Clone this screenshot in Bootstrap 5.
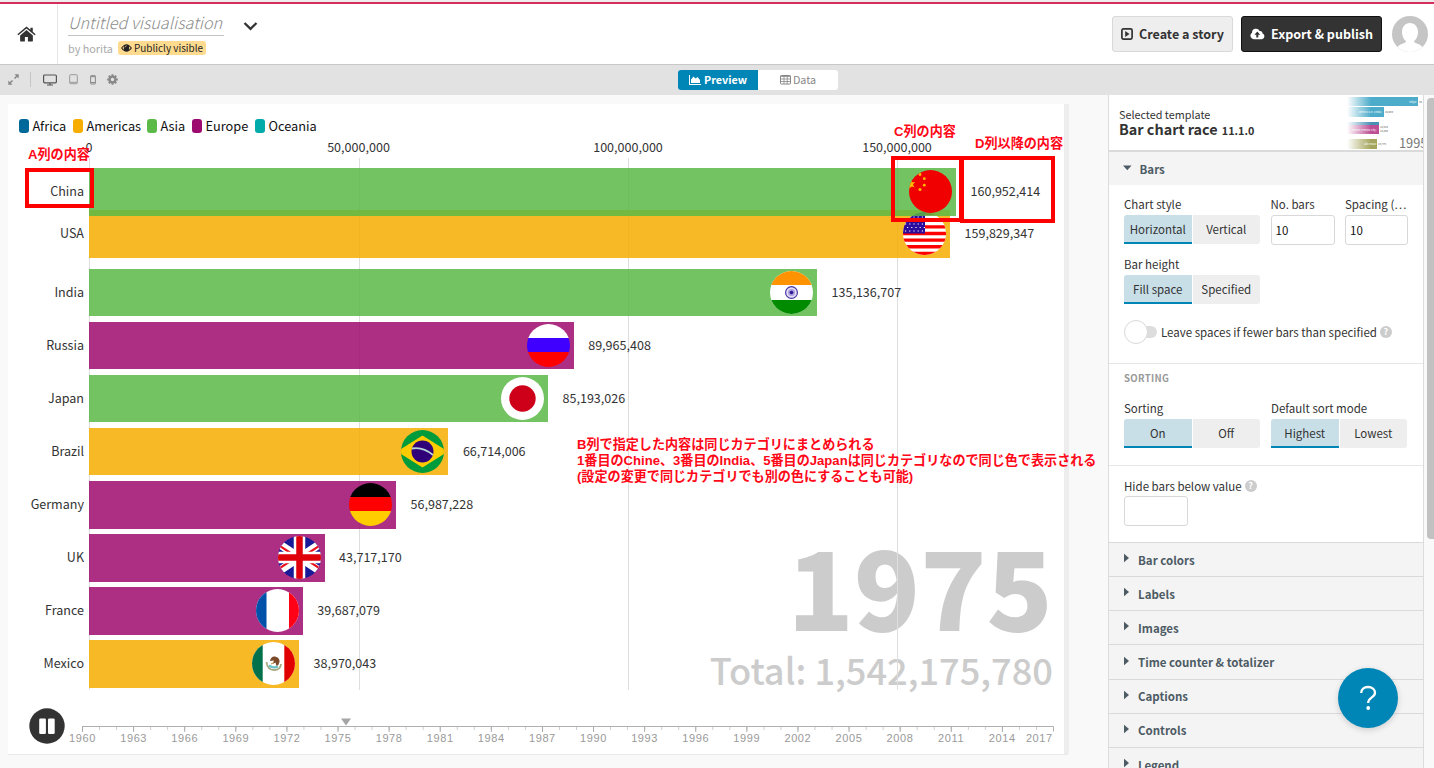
<!DOCTYPE html>
<html lang="en">
<head>
<meta charset="utf-8">
<meta name="viewport" content="width=device-width, initial-scale=1">
<title>Untitled visualisation</title>
<link rel="stylesheet" href="https://cdn.jsdelivr.net/npm/bootstrap@5.3.0/dist/css/bootstrap.min.css">
<style>
:root{--ink:#333;--line:#dcdcdc;--accent:#0086b6}
body{font-family:"Noto Sans CJK JP",sans-serif;font-size:12.55px;line-height:20px;color:var(--ink);background:#f9f9f9;height:768px;overflow:hidden}
svg{display:block;flex:none}
.topbar{height:65px;border-bottom:1px solid #c8c8c8;background:#fff;padding-top:4px;position:relative}
.topbar::before{content:"";position:absolute;left:0;right:0;top:0;height:4px;background:linear-gradient(#eee 0 2px,#d62e5c 2px 4px)}
.home{width:58px;border-right:1px solid #e6e6e6}
.vis-head{padding:7px 0 0 10px}
.vis-title{font-style:italic;font-weight:300;font-size:16.2px;line-height:22px;height:25px;width:156px;color:#8c8c8c;border-bottom:1px solid #c4c4c4;white-space:nowrap}
.byline{font-size:10.8px;color:#aaa;line-height:14px;margin-top:5px}
.visible-tag{background:#fedb8e;color:#222;border-radius:3px;height:14px;width:88px;padding-left:3px;white-space:nowrap;font-size:9.95px;line-height:12px}
.hbtn{height:36px;border-radius:3px;border:1px solid #d9d9d9;background:#eee;font-weight:700;font-size:12.55px;line-height:34px;padding:0;color:#333;white-space:nowrap}
.hbtn.dark{background:#333;border-color:#111;color:#fff}
.avatar{width:36px;height:36px;border-radius:50%;overflow:hidden}
.toolbar{height:30px;background:#e2e2e2;color:#888;padding:0 0 1px 8px}
.switcher{width:160px;height:20px;border-radius:3px;overflow:hidden;background:#fff;font-size:10.8px;line-height:19px;margin-left:560px}
.switcher>div{width:80px}
.switcher .on{background:var(--accent);color:#fff;font-weight:700}
.workspace{height:673px}
.stage{width:1061px;height:651px;margin:9px 0 0 8px;background:linear-gradient(90deg,#fff 1056px,#ededed 1056px);border-bottom:1px solid #e8e8e8;border-radius:0 0 3px 0;position:relative}
.legend-row{padding:12px 0 0 11px;color:#111;font-size:12.75px;height:32px;line-height:19px}
.swatch{width:10px;height:14px;border-radius:3px;margin-right:3.5px;flex:none}
.c-af{--c:#00699a}.c-am{--c:#f7ad00}.c-as{--c:#5bb947}.c-eu{--c:#9e0b6e}.c-oc{--c:#00aba9}
.swatch,.race-bar::before{background:var(--c)}
.plot{position:absolute;inset:0}
.tick-col{position:absolute;top:33px;width:100px;margin-left:-50px;text-align:center;line-height:20px}
.tick-col::after{content:"";position:absolute;left:50px;top:21px;width:1px;height:532px;background:#dedede}
.counter{position:absolute;right:16px;bottom:58px;text-align:right;color:#ccc;white-space:nowrap}
.counter .yr{font-size:109px;font-weight:900;line-height:104px;height:111px;margin-right:0}
.counter .tot{font-size:36.2px;line-height:53px;font-weight:500}
.race{position:relative;padding-top:32px}
.race-row{height:53.1px;position:relative}
.race-row.first{z-index:1}
.race-row.second{margin-top:-11px;height:58.5px}
.race-name{width:76px;margin-right:5px;text-align:right;line-height:45px}
.race-bar{height:47.6px;position:relative;padding:2px 4px 0 0}
.race-bar::before{content:"";position:absolute;inset:0;opacity:.85;border-radius:0}
.race-bar svg{position:relative;width:43px;height:43px;border-radius:50%}
.race-val{margin-left:14.5px;line-height:45px}
.timeline{position:absolute;left:21px;top:604px;width:1040px;height:44px}
.years{font-family:"Liberation Sans",sans-serif;font-size:11px;letter-spacing:.6px;color:#999;line-height:13px;margin-left:-25px;width:980px}
.years span{width:51.1px;text-align:center;flex:none}
.years .last{margin-left:-2px;text-align:right}
.note{position:absolute;color:#ff0818;font:700 13.1px/16px "Liberation Sans","Noto Sans CJK JP",sans-serif;white-space:nowrap}
.redbox{position:absolute;border:4px solid #f00;z-index:3}
.n-a{left:20px;top:43px}.n-c{left:886px;top:20px}.n-d{left:967px;top:32px}.n-b{left:569px;top:333px}
.b-a{left:17px;top:64px;width:69px;height:40px}.b-c{left:883px;top:52px;width:72px;height:66px}.b-d{left:952px;top:52px;width:95px;height:67px}
.side{width:316px;margin-left:39px;background:#fff;border:1px solid #dcdcdc;border-width:0 1px;overflow:hidden;font-size:11.5px}
.side-head{height:57px;border-bottom:2px solid #dadada;padding-left:10px;position:relative}
.tpl-name{font-weight:700;font-size:14.4px;line-height:14px}
.tpl-name small{font-size:10.8px;margin-left:1px}
.thumb{position:absolute;right:0;top:0}
.acc{height:34.17px;border-top:1px solid #dadada;background:#f4f4f4;font-weight:700;color:#4d5b64;padding-left:15px}
.acc.open{border:0;height:33px}
.acc svg{margin-right:8px;margin-top:-3px}
.acc.open svg{margin-top:-2px;margin-left:-2.5px}
.pane{padding:0 15px;border-bottom:1px solid #e6e6e6}
.field-grid{display:grid;grid-template-columns:136px 64px 63px;column-gap:10.5px}
.flabel{line-height:19px;height:20px;white-space:nowrap}
.seg{height:29px;width:136px;gap:1px}
.seg>div{flex:1;background:#eee;text-align:center;line-height:28px;border-radius:0 3px 3px 0}
.seg>.on{background:#c8dfe8;border-bottom:2px solid var(--accent);border-radius:3px 0 0 0}
.box-in{height:30px;border:1px solid #d8d8d8;border-radius:3px;line-height:29px;padding-left:4px;color:#111}
.switch-tr{flex:none;width:33px;height:24px;position:relative}
.switch-tr::before{content:"";position:absolute;left:10px;right:0;top:6px;height:12px;border-radius:6px;background:#ddd}
.switch-tr::after{content:"";position:absolute;left:0;top:0;width:24px;height:24px;border-radius:50%;border:1px solid #d8d8d8;background:#fff}
.qm{flex:none;width:12px;height:12px;border-radius:50%;background:#ccc;color:#fff;font-weight:700;font-size:9px;line-height:12px;text-align:center;margin-left:3px}
.subhead{font-size:9.6px;font-weight:700;color:#999;letter-spacing:.3px;line-height:19px;height:20px}
.scroller{width:10px;padding:3px 0 0 3px}
.scroller div{height:441px;background:#c1c1c1;border-radius:4px 0 0 4px}
.help{position:absolute;left:1338px;top:668px;width:60px;height:60px;border-radius:50%;background:var(--accent)!important;box-shadow:0 2px 6px rgba(0,0,0,.16);z-index:5}
</style>
</head>
<body>
<header class="topbar d-flex">
  <div class="home d-flex align-items-center justify-content-center pe-1">
    <svg width="19" height="17" viewBox="0 0 20 17" fill="#333"><path d="M10 3.8 3.300 9.600V15q0 .9.9.9H8.300V11h3.200v4.900h4.300q.9 0 .9-.9V9.600z"/><path d="M10 0 .4 8.200l1 1.200L10 2.200l8.600 7.200 1-1.200-3-2.600V1.300h-2.500v2.300z"/></svg>
  </div>
  <div class="vis-head">
    <div class="vis-title">Untitled visualisation</div>
    <div class="byline d-flex"><span style="width:50px">by horita</span>
      <span class="visible-tag d-flex align-items-center"><svg style="margin-right:2px" width="11" height="8" viewBox="0 0 11 8"><path d="M0 4Q5.500-3.600 11 4 5.500 11.600 0 4" fill="#222"/><path d="M1.300 4Q2 2.800 3 2.200 2.300 4.300 3.300 5.900 2 5.200 1.300 4m8.400 0Q9 2.800 8 2.200 8.700 4.300 7.700 5.900 9 5.200 9.700 4" fill="#fedb8e"/><path d="M4 3.300Q4.300 2 5.500 1.800" stroke="#fedb8e" stroke-width=".8" fill="none"/></svg>Publicly visible</span></div>
  </div>
  <svg class="ms-3" style="margin-top:15px" width="20" height="14" viewBox="0 0 20 14"><path d="m4.500 4 6 5.800 6-5.800" fill="none" stroke="#333" stroke-width="2.300"/></svg>
  <div class="ms-auto d-flex gap-2" style="padding:12px 6px 0 0">
    <div class="hbtn d-flex align-items-center" style="width:121px;padding-left:8px"><svg style="margin-right:6px" width="12" height="12" viewBox="0 0 12 12"><rect x=".9" y=".9" width="10.200" height="10.200" rx="1.500" fill="none" stroke="#333" stroke-width="1.700"/><path d="M4.200 3v6l4.300-3z" fill="#333"/></svg>Create a story</div>
    <div class="hbtn dark d-flex align-items-center" style="width:141px;padding-left:8px"><svg style="margin-right:6px" width="15" height="12" viewBox="0 0 15 12"><path d="M4 11.200A3.500 3.500 0 0 1 2 4.800 4 4 0 0 1 9.600 3q3-.4 3 2.500a3 3 0 0 1-.600 5.700z" fill="#fff"/><path d="M7.300 3.600 4.400 6.700h1.900v2.700h2V6.700h1.900z" fill="#333"/></svg>Export &amp; publish</div>
    <div class="avatar" style="margin-left:2px"><svg width="36" height="36"><rect width="36" height="36" fill="#c5c5c5"/><path d="M18 7c5 0 8 4 8 9 0 4-2 8-4 9 0 3 7 2 10 8v6H4v-6c3-6 10-5 10-8-2-1-4-5-4-9 0-5 3-9 8-9" fill="#fff"/></svg></div>
  </div>
</header>
<div class="toolbar d-flex align-items-center">
  <svg width="11" height="11" viewBox="0 0 11 11" fill="#888" stroke="#888"><path d="m1.500 9.500 3-3m2-2 3-3" fill="none" stroke-width="1.500"/><path d="M6.500 .300h4.200v4.200zM.300 6.500v4.200h4.200z" stroke="none"/></svg>
  <div style="width:1px;height:15px;background:#c4c4c4;margin:0 12px 0 11px"></div>
  <svg width="14" height="12" viewBox="0 0 14 12" fill="none" stroke="#555"><rect x=".6" y="1" width="12.800" height="7.800" rx="1" stroke-width="1.200"/><path d="M7 9v2M4 11h6" stroke-width="1.200"/></svg>
  <svg style="margin-left:12px" width="9" height="11" viewBox="0 0 9 11" fill="none" stroke="#999"><rect x=".7" y=".7" width="7.600" height="9" rx=".8"/><path d="M1 8.300h7"/></svg>
  <svg style="margin-left:12px" width="6" height="10" viewBox="0 0 6 10" fill="none" stroke="#888"><rect x=".6" y=".6" width="4.800" height="8.400" rx=".6"/><path d="M1 1.700h4M1 7.500h4"/></svg>
  <svg style="margin-left:11px" width="11" height="11" viewBox="-5.500 -5.500 11 11" fill="none" stroke="#888"><circle r="2.900" stroke-width="2.300"/><path d="M0-5.300V-3M0 5.300V3M-5.300 0H-3M5.300 0H3M-3.700-3.700-2.300-2.300M3.700 3.700 2.300 2.300M-3.700 3.700-2.300 2.300M3.700-3.700 2.300-2.300" stroke-width="2"/></svg>
  <div class="switcher d-flex">
    <div class="on d-flex align-items-center justify-content-center"><svg style="margin-right:3px" width="12" height="10" viewBox="0 0 12 10" fill="#fff"><path d="M0 0h1v9h11v1H0z"/><path d="M2 8V4.500l2.500-3 2 2L8.500 2l2.500 3v3z"/></svg>Preview</div>
    <div class="d-flex align-items-center justify-content-center"><svg width="11" height="10" viewBox="0 0 11 10" fill="none" stroke="#888" style="margin-right:2px"><rect x=".5" y=".5" width="10" height="8.500" rx=".7"/><path d="M0 1.500h11M0 4h11M0 6.500h11M4 1v8M7.200 1v8" stroke-width=".8"/></svg>Data</div>
  </div>
</div>
<main class="workspace d-flex">
  <section class="stage">
    <div class="plot">
      <div class="counter"><div class="yr">1975</div><div class="tot">Total: 1,542,175,780</div></div>
      <div class="tick-col" style="left:81px">0</div>
      <div class="tick-col" style="left:350.500px">50,000,000</div>
      <div class="tick-col" style="left:620px">100,000,000</div>
      <div class="tick-col" style="left:889px">150,000,000</div>
    </div>
    <div class="legend-row d-flex align-items-start">
      <div class="d-flex align-items-center" style="width:54px"><i class="swatch c-af"></i>Africa</div>
      <div class="d-flex align-items-center" style="width:74px"><i class="swatch c-am"></i>Americas</div>
      <div class="d-flex align-items-center" style="width:45px"><i class="swatch c-as"></i>Asia</div>
      <div class="d-flex align-items-center" style="width:63px"><i class="swatch c-eu"></i>Europe</div>
      <div class="d-flex align-items-center"><i class="swatch c-oc"></i>Oceania</div>
    </div>
    <div class="race">
      <div class="race-row first d-flex"><div class="race-name">China</div><div class="race-bar c-as d-flex justify-content-end" style="width:867px"><svg viewBox="0 0 43 43"><path fill="#f00000" d="M0 0h43v43H0z"/><g fill="#fb0"><path d="m2 9 .8 3.300L6 12l-2 2.500 1.500 3-2.500-1-3 2V9z"/><circle cx="11" cy="4.500" r="1.400"/><circle cx="15.300" cy="8.700" r="1.400"/><circle cx="15.300" cy="15.200" r="1.400"/><circle cx="11" cy="19.500" r="1.500"/></g></svg></div><div class="race-val">160,952,414</div></div>
      <div class="race-row second d-flex"><div class="race-name">USA</div><div class="race-bar c-am d-flex justify-content-end" style="width:861px"><svg viewBox="0 0 43 43"><path fill="#fff" d="M0 0h43v43H0z"/><path d="M0 1.650h43M0 8.260h43M0 14.880h43M0 21.500h43M0 28.120h43M0 34.730h43M0 41.350h43" stroke="red" stroke-width="3.300"/><path fill="#2c0a9c" d="M0 0h22v21.500H0z"/><path d="M2 5h20M4 8.500h18M2 12h20M4 15.500h18M2 19h20" stroke="#fff" stroke-width="1.200" stroke-dasharray="1.200 3"/></svg></div><div class="race-val">159,829,347</div></div>
      <div class="race-row d-flex"><div class="race-name">India</div><div class="race-bar c-as d-flex justify-content-end" style="width:728px"><svg viewBox="0 0 43 43"><path fill="#fff" d="M0 0h43v43H0z"/><path fill="#ff9200" d="M0 0h43v14H0z"/><path fill="#008b00" d="M0 29h43v14H0z"/><circle cx="21.500" cy="21.500" r="5.900" fill="#e4e0f5" stroke="#4a35a5" stroke-width="1.200"/><circle cx="21.500" cy="21.500" r="3.500" fill="#a79ddb"/><circle cx="21.500" cy="21.500" r="1.800" fill="#30189b"/></svg></div><div class="race-val">135,136,707</div></div>
      <div class="race-row d-flex"><div class="race-name">Russia</div><div class="race-bar c-eu d-flex justify-content-end" style="width:484.700px"><svg viewBox="0 0 43 43"><path fill="#fff" d="M0 0h43v14H0z"/><path fill="#4000ff" d="M0 14h43v14H0z"/><path fill="red" d="M0 28h43v15H0z"/></svg></div><div class="race-val">89,965,408</div></div>
      <div class="race-row d-flex"><div class="race-name">Japan</div><div class="race-bar c-as d-flex justify-content-end" style="width:459px"><svg viewBox="0 0 43 43"><path fill="#fff" d="M0 0h43v43H0z"/><circle cx="21.500" cy="21.500" r="13.200" fill="#ce0019"/></svg></div><div class="race-val">85,193,026</div></div>
      <div class="race-row d-flex"><div class="race-name">Brazil</div><div class="race-bar c-am d-flex justify-content-end" style="width:359.400px"><svg viewBox="0 0 43 43"><path fill="#009b3a" d="M0 0h43v43H0z"/><path fill="#fecb00" d="M-4 21.500 21.500 5.500 47 21.500l-25.500 16z"/><circle cx="21.500" cy="21.500" r="11" fill="#300078"/><path d="M11 18.500q11-2 21 6.500" fill="none" stroke="#b6d5d8" stroke-width="1.800"/></svg></div><div class="race-val">66,714,006</div></div>
      <div class="race-row d-flex"><div class="race-name">Germany</div><div class="race-bar c-eu d-flex justify-content-end" style="width:307px"><svg viewBox="0 0 43 43"><path d="M0 0h43v14H0z"/><path fill="red" d="M0 14h43v14H0z"/><path fill="#fc0" d="M0 28h43v15H0z"/></svg></div><div class="race-val">56,987,228</div></div>
      <div class="race-row d-flex"><div class="race-name">UK</div><div class="race-bar c-eu d-flex justify-content-end" style="width:235.500px"><svg viewBox="0 0 43 43"><path fill="#181a98" d="M0 0h43v43H0z"/><path d="M-11 0 54 43M54 0-11 43" stroke="#fff" stroke-width="8"/><path d="m-11 1.500 32 21M54 1.500l-32 21M-11 40.500l32-21M54 40.500l-32-21" stroke="#e8101c" stroke-width="2.200"/><path d="M21.500 0v43M0 21.500h43" stroke="#fff" stroke-width="11.500"/><path d="M21.500 0v43M0 21.500h43" stroke="#e0000c" stroke-width="6.500"/></svg></div><div class="race-val">43,717,170</div></div>
      <div class="race-row d-flex"><div class="race-name">France</div><div class="race-bar c-eu d-flex justify-content-end" style="width:213.800px"><svg viewBox="0 0 43 43"><path fill="#fff" d="M0 0h43v43H0z"/><path fill="#0051aa" d="M0 0h10.500v43H0z"/><path fill="#ff0017" d="M33 0h10v43H33z"/></svg></div><div class="race-val">39,687,079</div></div>
      <div class="race-row d-flex"><div class="race-name">Mexico</div><div class="race-bar c-am d-flex justify-content-end" style="width:210px"><svg viewBox="0 0 43 43"><path fill="#fff" d="M0 0h43v43H0z"/><path fill="#00714a" d="M0 0h10.700v43H0z"/><path fill="#e00000" d="M32.300 0H43v43H32.300z"/><path d="M14.500 20q1 8 7.500 8t7-6" fill="none" stroke="#a6ab84" stroke-width="1.800"/><path d="M17 23.500q4 3 9 1" stroke="#6cc3c7" stroke-width="2.200" fill="none"/><path d="M18 19q1-5 5-4.500 5 1 4.500 5.500-.500 3-3 4l-1-3.500-3 1.500 1.500-3.500z" fill="#7a4a2a"/><path d="m19 22 3-1.500" stroke="#c78c3c"/></svg></div><div class="race-val">38,970,043</div></div>
    </div>
    <div class="timeline d-flex">
      <svg width="36" height="36" viewBox="0 0 36 36"><circle cx="18" cy="18" r="17.700" fill="#333"/><rect x="10.200" y="10.500" width="6.700" height="15.500" rx="1.200" fill="#fff"/><rect x="19" y="10.500" width="6.700" height="15.500" rx="1.200" fill="#fff"/></svg>
      <div style="margin-left:17px;padding-top:9px">
        <svg width="974" height="15" viewBox="0 0 974 15"><defs><pattern id="minor" width="17.035" height="15" patternUnits="userSpaceOnUse"><path d="M.500 9v4" stroke="#ccc"/></pattern><pattern id="major" width="51.105" height="15" patternUnits="userSpaceOnUse"><path d="M.500 9v6" stroke="#aaa"/></pattern></defs><rect width="971" height="15" fill="url(#minor)"/><rect width="971" height="15" fill="url(#major)"/><path d="M0 9.500h971.500v5" fill="none" stroke="#b0b0b0"/><path d="M259 1.500h10l-5 7z" fill="#a5a5a5"/></svg>
        <div class="years d-flex"><span>1960</span><span>1963</span><span>1966</span><span>1969</span><span>1972</span><span>1975</span><span>1978</span><span>1981</span><span>1984</span><span>1987</span><span>1990</span><span>1993</span><span>1996</span><span>1999</span><span>2002</span><span>2005</span><span>2008</span><span>2011</span><span>2014</span><span class="last" style="width:27px">2017</span></div>
      </div>
    </div>
    <div class="note n-a">A列の内容</div><div class="note n-c">C列の内容</div><div class="note n-d">D列以降の内容</div>
    <div class="note n-b">B列で指定した内容は同じカテゴリにまとめられる<br>1番目のChine、3番目のIndia、5番目のJapanは同じカテゴリなので同じ色で表示される<br>(設定の変更で同じカテゴリでも別の色にすることも可能)</div>
    <div class="redbox b-a"></div><div class="redbox b-c"></div><div class="redbox b-d"></div>
  </section>
  <aside class="side">
    <div class="side-head">
      <div style="padding-top:12px;font-size:10.8px;line-height:15px">Selected template</div>
      <div class="tpl-name">Bar chart race <small>11.1.0</small></div>
      <svg class="thumb" width="76" height="55" viewBox="0 0 76 55"><defs><linearGradient id="fade"><stop offset="0" stop-color="#fff"/><stop offset="1" stop-color="#fff" stop-opacity="0"/></linearGradient></defs><path fill="#4eaccb" d="M0 2h71v9H0zM0 12h37v10H0z"/><path fill="#4a90b5" d="M0 27h32v4H0z"/><path fill="#bd4f95" d="M0 30h32v9H0z"/><path fill="#a5a55c" d="M0 44h30v10H0z"/><rect width="24" height="55" fill="url(#fade)"/><g font-size="2.600" fill="#fff"><text x="62" y="8">Tokyo</text><text x="12" y="18">Delhi N.C.R. (India)</text><text x="5" y="36">Mexico (Mexico City)</text><text x="17" y="50">São Paulo</text></g><g font-size="2.600" fill="#555"><text x="72" y="8">35</text><text x="38" y="18">20,859</text><text x="33" y="32.500">18,625</text><text x="33" y="36.500">18,455</text><text x="31" y="50">16,776</text></g><text x="52" y="52.500" font-size="12.800" fill="#777">1995</text></svg>
    </div>
    <div class="acc open d-flex align-items-center"><svg width="10" height="6" viewBox="0 0 10 6"><path d="M1 .5h8.500L5.300 5.300z" fill="#4d5b64"/></svg>Bars</div>
    <div class="pane" style="height:179px;padding-top:10px">
      <div class="field-grid">
        <div><div class="flabel">Chart style</div><div class="seg d-flex"><div class="on">Horizontal</div><div>Vertical</div></div></div>
        <div><div class="flabel">No. bars</div><div class="box-in">10</div></div>
        <div><div class="flabel">Spacing (…</div><div class="box-in">10</div></div>
      </div>
      <div class="flabel" style="margin-top:10px">Bar height</div>
      <div class="seg d-flex"><div class="on">Fill space</div><div>Specified</div></div>
      <div class="d-flex align-items-center text-nowrap" style="margin-top:16px"><div class="switch-tr"></div><span style="margin-left:4px">Leave spaces if fewer bars than specified</span><span class="qm">?</span></div>
    </div>
    <div class="pane" style="height:102px;padding-top:5px">
      <div class="subhead">SORTING</div>
      <div class="d-flex" style="margin-top:10px;gap:11px">
        <div><div class="flabel">Sorting</div><div class="seg d-flex"><div class="on">On</div><div>Off</div></div></div>
        <div><div class="flabel">Default sort mode</div><div class="seg d-flex"><div class="on">Highest</div><div>Lowest</div></div></div>
      </div>
    </div>
    <div class="pane border-0" style="height:76px;padding-top:10px">
      <div class="flabel d-flex align-items-center">Hide bars below value<span class="qm">?</span></div>
      <div class="box-in" style="width:64px"></div>
    </div>
    <div class="acc d-flex align-items-center"><svg width="6" height="10" viewBox="0 0 6 10"><path d="M0 .7v8.600l5-4.300z" fill="#4d5b64"/></svg>Bar colors</div>
    <div class="acc d-flex align-items-center"><svg width="6" height="10" viewBox="0 0 6 10"><path d="M0 .7v8.600l5-4.300z" fill="#4d5b64"/></svg>Labels</div>
    <div class="acc d-flex align-items-center"><svg width="6" height="10" viewBox="0 0 6 10"><path d="M0 .7v8.600l5-4.300z" fill="#4d5b64"/></svg>Images</div>
    <div class="acc d-flex align-items-center"><svg width="6" height="10" viewBox="0 0 6 10"><path d="M0 .7v8.600l5-4.300z" fill="#4d5b64"/></svg>Time counter &amp; totalizer</div>
    <div class="acc d-flex align-items-center"><svg width="6" height="10" viewBox="0 0 6 10"><path d="M0 .7v8.600l5-4.300z" fill="#4d5b64"/></svg>Captions</div>
    <div class="acc d-flex align-items-center"><svg width="6" height="10" viewBox="0 0 6 10"><path d="M0 .7v8.600l5-4.300z" fill="#4d5b64"/></svg>Controls</div>
    <div class="acc d-flex align-items-center"><svg width="6" height="10" viewBox="0 0 6 10"><path d="M0 .7v8.600l5-4.300z" fill="#4d5b64"/></svg>Legend</div>
  </aside>
  <div class="scroller"><div></div></div>
</main>
<button class="help btn p-0 border-0 d-flex align-items-center justify-content-center" aria-label="Help"><svg width="20" height="26" viewBox="0 0 20 26"><path d="M3.200 8C3.200 4.500 6 2 10 2s7 2.200 7 5.700c0 5-6.800 4.500-6.800 10.300" fill="none" stroke="#fff" stroke-width="2.300"/><circle cx="10.200" cy="23" r="1.900" fill="#fff"/></svg></button>
<script src="https://cdn.jsdelivr.net/npm/bootstrap@5.3.0/dist/js/bootstrap.bundle.min.js"></script>
</body>
</html>
